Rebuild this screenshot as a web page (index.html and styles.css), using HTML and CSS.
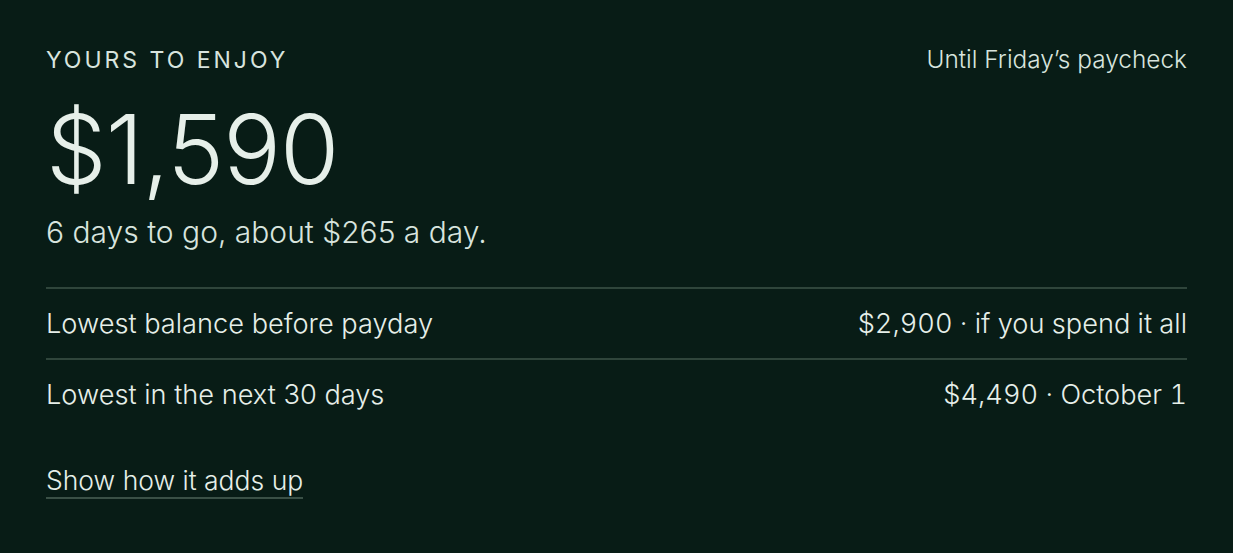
FILE: index.html
```html
<!DOCTYPE html>
<html lang="en">
<head>
<meta charset="utf-8">
<link rel="stylesheet" href="styles.css">
</head>
<body>
<main class="card">
  <header class="top">
    <span class="eyebrow">Yours to enjoy</span>
    <span class="period">Until Friday’s paycheck</span>
  </header>
  <div class="amount">$1,590</div>
  <p class="pace">6 days to go, about $265 a day.</p>
  <ul class="rows">
    <li class="row"><span>Lowest balance before payday</span><span class="value">$2,900 · if you spend it all</span></li>
    <li class="row"><span>Lowest in the next 30 days</span><span class="value">$4,490 · October 1</span></li>
  </ul>
  <a class="more" href="#">Show how it adds up</a>
</main>
</body>
</html>
```
FILE: styles.css
```css
html, body {
  margin: 0;
  background: #081c16;
}
body {
  font-family: Inter, "Noto Sans", sans-serif;
  font-weight: 300;
  color: #e6efe9;
}
.card {
  padding: 45px 46px 40px;
  display: flex;
  flex-direction: column;
}
.top {
  display: flex;
  justify-content: space-between;
  align-items: baseline;
  line-height: 28px;
}
.eyebrow {
  font-size: 23px;
  letter-spacing: 0.13em;
  text-transform: uppercase;
  color: #d8e4de;
  font-weight: 400;
}
.period {
  font-size: 24.4px;
  color: #d8e4de;
}
.amount {
  font-size: 96px;
  line-height: 110px;
  letter-spacing: -0.01em;
  margin-top: 20px;
}
.pace {
  margin: 10px 0 0;
  font-size: 30px;
  line-height: 36px;
  color: #d8e4de;
}
.rows {
  list-style: none;
  margin: 37px 0 0;
  padding: 0;
}
.row {
  display: flex;
  justify-content: space-between;
  align-items: center;
  height: 69px;
  font-size: 27.2px;
  border-top: 2px solid #2f453b;
}
.value {
  font-variant-numeric: tabular-nums;
}
.more {
  align-self: flex-start;
  margin-top: 34px;
  font-size: 26.5px;
  color: #e6efe9;
  text-decoration: none;
  border-bottom: 2px solid #3a5046;
  line-height: 34px;
}
```
